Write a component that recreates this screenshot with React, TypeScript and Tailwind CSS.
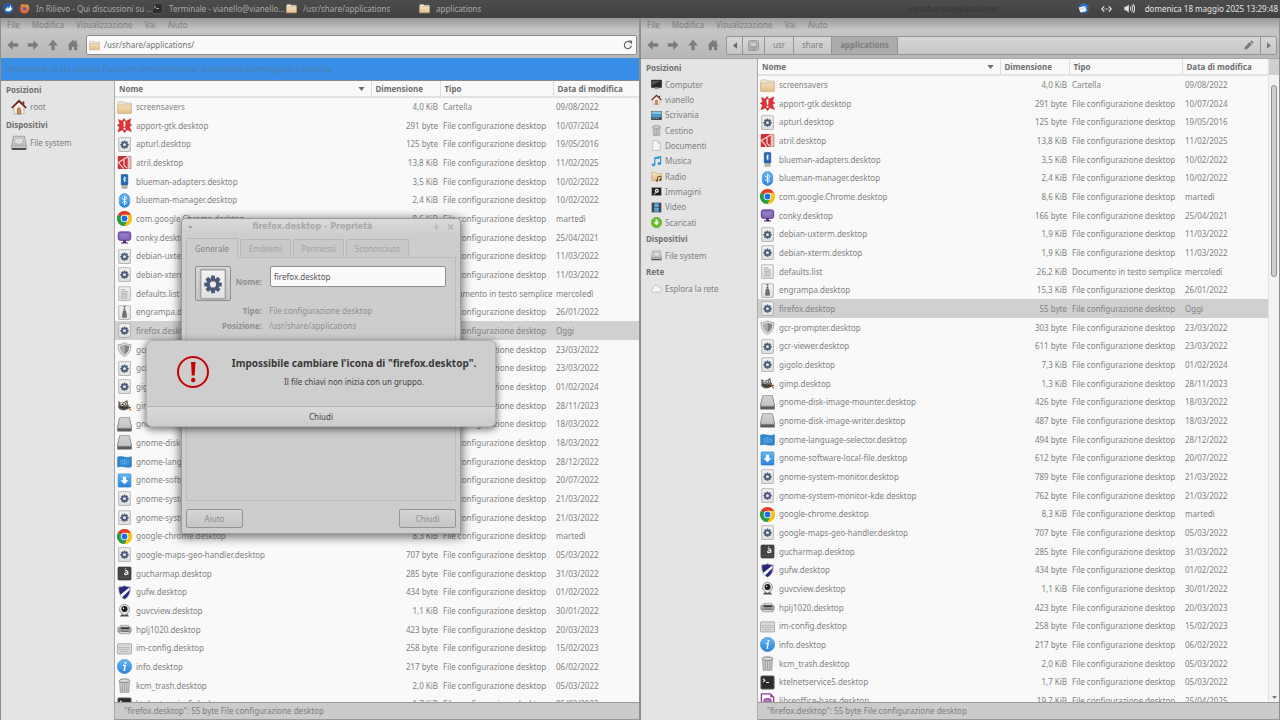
import type { ReactNode } from "react";
import clsx from "clsx";

type FileRow = [icon: string, name: string, size: string, type: string, date: string];

const DESKTOP = "File configurazione desktop";

const files: FileRow[] = [
  ["folder", "screensavers", "4,0 KiB", "Cartella", "09/08/2022"],
  ["apport", "apport-gtk.desktop", "291 byte", DESKTOP, "10/07/2024"],
  ["gear", "apturl.desktop", "125 byte", DESKTOP, "19/05/2016"],
  ["atril", "atril.desktop", "13,8 KiB", DESKTOP, "11/02/2025"],
  ["adapter", "blueman-adapters.desktop", "3,5 KiB", DESKTOP, "10/02/2022"],
  ["bluetooth", "blueman-manager.desktop", "2,4 KiB", DESKTOP, "10/02/2022"],
  ["chrome", "com.google.Chrome.desktop", "8,6 KiB", DESKTOP, "martedì"],
  ["conky", "conky.desktop", "166 byte", DESKTOP, "25/04/2021"],
  ["gear", "debian-uxterm.desktop", "1,9 KiB", DESKTOP, "11/03/2022"],
  ["gear", "debian-xterm.desktop", "1,9 KiB", DESKTOP, "11/03/2022"],
  ["text", "defaults.list", "26,2 KiB", "Documento in testo semplice", "mercoledì"],
  ["zip", "engrampa.desktop", "15,3 KiB", DESKTOP, "26/01/2022"],
  ["gear", "firefox.desktop", "55 byte", DESKTOP, "Oggi"],
  ["shield", "gcr-prompter.desktop", "303 byte", DESKTOP, "23/03/2022"],
  ["gear", "gcr-viewer.desktop", "611 byte", DESKTOP, "23/03/2022"],
  ["gear", "gigolo.desktop", "7,3 KiB", DESKTOP, "01/02/2024"],
  ["gimp", "gimp.desktop", "1,3 KiB", DESKTOP, "28/11/2023"],
  ["disk", "gnome-disk-image-mounter.desktop", "426 byte", DESKTOP, "18/03/2022"],
  ["disk", "gnome-disk-image-writer.desktop", "487 byte", DESKTOP, "18/03/2022"],
  ["flag", "gnome-language-selector.desktop", "494 byte", DESKTOP, "28/12/2022"],
  ["install", "gnome-software-local-file.desktop", "612 byte", DESKTOP, "20/07/2022"],
  ["gear", "gnome-system-monitor.desktop", "789 byte", DESKTOP, "21/03/2022"],
  ["gear", "gnome-system-monitor-kde.desktop", "762 byte", DESKTOP, "21/03/2022"],
  ["chrome", "google-chrome.desktop", "8,3 KiB", DESKTOP, "martedì"],
  ["gear", "google-maps-geo-handler.desktop", "707 byte", DESKTOP, "05/03/2022"],
  ["charmap", "gucharmap.desktop", "285 byte", DESKTOP, "31/03/2022"],
  ["gufw", "gufw.desktop", "434 byte", DESKTOP, "01/02/2022"],
  ["webcam", "guvcview.desktop", "1,1 KiB", DESKTOP, "30/01/2022"],
  ["printer", "hplj1020.desktop", "423 byte", DESKTOP, "20/03/2023"],
  ["keyboard", "im-config.desktop", "258 byte", DESKTOP, "15/02/2023"],
  ["info", "info.desktop", "217 byte", DESKTOP, "06/02/2022"],
  ["trash", "kcm_trash.desktop", "2,0 KiB", DESKTOP, "05/03/2022"],
  ["terminal", "ktelnetservice5.desktop", "1,7 KiB", DESKTOP, "05/03/2022"],
  ["base", "libreoffice-base.desktop", "19,7 KiB", DESKTOP, "25/04/2025"],
];

const gearTeeth = [0, 45, 90, 135, 180, 225, 270, 315];

const Gear = () => (
  <g fill="#4b5a78">
    {gearTeeth.map((a) => (
      <rect key={a} x="7" y="3.8" width="2" height="2.4" rx=".4" transform={`rotate(${a} 8 8.2)`} />
    ))}
    <circle cx="8" cy="8.2" r="2.4" fill="none" stroke="#4b5a78" strokeWidth="1.7" />
  </g>
);

const Page = ({ children }: { children?: ReactNode }) => (
  <>
    <rect x="1.8" y=".8" width="12.4" height="14.6" rx=".5" fill="url(#page)" stroke="#a3a3a3" strokeWidth=".8" />
    {children}
  </>
);

const icons: Record<string, ReactNode> = {
  folder: (
    <>
      <path d="M1 3.2 1.6 2h5l.8 1.3H15v3H1z" fill="#f3eee4" stroke="#bba888" strokeWidth=".7" />
      <path d="M.6 5.2h14.8v8.3a.8.8 0 0 1-.8.8H1.4a.8.8 0 0 1-.8-.8z" fill="url(#folder)" stroke="#c8a97c" strokeWidth=".7" />
    </>
  ),
  apport: (
    <>
      <path
        d="M7.500.5 9.600 3.500 14.800.8l-1.300 4.700 2.300 2-2.600 1.800 2.300 5-5-1.800L8 15.700l-2-3-5 2 1.700-5L.2 7.800l2.600-2L1.500 1.500l4 1.600z"
        fill="#dc3437"
        stroke="#b71f25"
        strokeWidth=".5"
      />
      <path d="M6.900 3.500h2.200l-.4 5.800H7.300zM7 10.400h2v2H7z" fill="#fff" />
    </>
  ),
  gear: <Page><Gear /></Page>,
  atril: (
    <>
      <rect x=".8" y="1" width="14.400" height="14" rx="1" fill="#ca3034" />
      <path d="M12 1.500 1.500 8 7 14.500M7.500 5v6l3 3M12 1.500V15" fill="none" stroke="#f4e1df" strokeWidth="1.200" />
      <path d="M12.600 1.500h2v13h-2z" fill="#d9d2cf" />
    </>
  ),
  adapter: (
    <>
      <rect x="4.500" y=".5" width="7" height="11.500" rx="1" fill="#2268b8" stroke="#174b8b" strokeWidth=".6" />
      <path d="M5.200 12h5.600v3.300H5.200z" fill="#b9bda8" stroke="#8c8f80" strokeWidth=".5" />
      <path d="m6.600 4.300 2.800 2.800L8 8.400V2.800l1.400 1.300-2.800 2.800" fill="none" stroke="#fff" strokeWidth=".8" />
    </>
  ),
  bluetooth: (
    <>
      <rect x="2.500" y=".6" width="11" height="14.800" rx="5.300" fill="url(#blue)" stroke="#2f78bd" strokeWidth=".5" />
      <path d="m5.500 5.300 5 5L8 12.600V3.400l2.500 2.300-5 5" fill="none" stroke="#fff" strokeWidth="1" />
    </>
  ),
  chrome: (
    <>
      <circle cx="8" cy="8" r="8" fill="#fbc116" />
      <path d="M8 8 1.070 4A8 8 0 0 1 14.930 4z" fill="#e33b2e" />
      <path d="M8 8 1.070 4A8 8 0 0 0 8 16l3.500-6z" fill="#249b48" />
      <path d="M8 4h6.930A8 8 0 0 1 8 16l3.500-6z" fill="#fbc116" />
      <circle cx="8" cy="8" r="4" fill="#fff" />
      <circle cx="8" cy="8" r="3.100" fill="#1b6ee8" />
    </>
  ),
  conky: (
    <>
      <rect x="1.400" y="2" width="13.200" height="9" rx="2" fill="#8669bd" stroke="#55368c" strokeWidth="1" />
      <path d="M3.500 4.500h9M3.500 6h9M3.500 7.500h7" stroke="#b19bd7" strokeWidth=".5" />
      <path d="M6.500 11h3v2h2v1.300h-7V13h2z" fill="#4b2d7c" />
    </>
  ),
  text: <Page><path d="M4 4h5M4 6.200h8M4 8.400h7M4 10.600h8M4 12.800h7" stroke="#a9a9a9" strokeWidth="1.100" /></Page>,
  zip: (
    <Page>
      <path d="M8 1v6" stroke="#555" strokeWidth="1.800" strokeDasharray="1 .6" />
      <path d="M6.800 6.500h2.400l.8 4v2.500H6v-2.500z" fill="#747474" stroke="#484848" strokeWidth=".6" />
    </Page>
  ),
  shield: (
    <>
      <path d="M8 .8C5.500 2.400 3.500 2.700 1.200 2.700c0 6 1.600 10.200 6.800 12.600 5.200-2.400 6.800-6.600 6.800-12.600C12.500 2.700 10.500 2.400 8 .8z" fill="#e3e3e3" stroke="#868686" strokeWidth=".7" />
      <path d="M8 2.600C6 3.800 4.700 4 2.900 4.100 3.100 8.500 4.300 11.600 8 13.500z" fill="#aaadaf" />
      <path d="M8 2.600c2 1.200 3.300 1.400 5.100 1.500-.2 4.400-1.400 7.500-5.100 9.400z" fill="#7f8386" />
    </>
  ),
  gimp: (
    <>
      <path d="M1.200 2.800 4 5l3.500-.7L11 2l.7 4.500c1.500 1.500 1.500 4-.5 5.500-3 2-8.500 1.500-9.700-1.500-.7-2 .5-3.500.2-5z" fill="#5f594f" />
      <circle cx="5.300" cy="6.500" r="1.800" fill="#f2f2ec" />
      <circle cx="9" cy="6.200" r="1.700" fill="#f2f2ec" />
      <circle cx="5.500" cy="6.600" r=".8" />
      <circle cx="8.900" cy="6.300" r=".8" />
      <path d="m3 9.500 4.500 1.200L14.500 10" stroke="#312d28" strokeWidth="1.400" fill="none" />
      <path d="m12 10 2.800 3.200" stroke="#b4713b" strokeWidth="1.600" />
    </>
  ),
  disk: (
    <>
      <path d="M2.500 1.300h11L15.700 11v3.600a.9.900 0 0 1-.9.900H1.200a.9.900 0 0 1-.9-.9V11z" fill="#5c5c5c" />
      <path d="M2.800.6h10.400l2.500 11.400H.3z" fill="url(#metal)" stroke="#858585" strokeWidth=".7" />
    </>
  ),
  flag: (
    <>
      <path d="M.6 3.300c2.500-1 4.500-.6 7.400 0s5 .4 7.400-.5v10.800c-2.400.8-4.500.8-7.400.2s-5-.6-7.400.1z" fill="#2c86cf" stroke="#1c68aa" strokeWidth=".5" />
      <circle cx="8" cy="8.400" r="2.600" fill="none" stroke="#8ac0eb" strokeWidth=".6" />
      <path d="M5.400 8.400h5.200M8 5.800v5.200" stroke="#8ac0eb" strokeWidth=".4" />
      <path d="M4.300 6c-1.500 2-.8 4.500.8 5.600M11.700 6c1.500 2 .8 4.500-.8 5.600" fill="none" stroke="#8ac0eb" strokeWidth=".5" />
    </>
  ),
  install: (
    <>
      <rect x="1.200" y="1" width="13.600" height="14" rx=".8" fill="url(#blue)" stroke="#2d80c8" strokeWidth=".7" />
      <path d="M6.300 4h3.400v3.700h2.500L8 12 3.800 7.700h2.500z" fill="#fff" />
    </>
  ),
  charmap: (
    <>
      <rect x="1" y="1" width="14" height="14" rx="1.200" fill="#444" stroke="#303030" strokeWidth=".6" />
      <path d="M8.500 2.500 10 3.600" stroke="#ddd" strokeWidth=".9" />
      <path d="M8.300 5.500c1.500-1 3.300-.6 3.300.9v2.800M11.600 7c-2-.2-3.500.2-3.500 1.300 0 1.300 2.200 1.300 3.500-.1" fill="none" stroke="#eee" strokeWidth="1.200" />
      <path d="M1.500 12h13" stroke="#666" strokeWidth=".5" />
    </>
  ),
  gufw: (
    <>
      <path d="M8 .8c-2 .9-4 1.200-6.200 1.200 0 6 1.200 10.300 6.200 13.300 5-3 6.200-7.300 6.200-13.300C12 2 10 1.700 8 .8z" fill="#27277d" stroke="#b0b0bc" strokeWidth=".8" />
      <path d="M13.400 2.300 3.300 10.700l2 2.600 8.200-8z" fill="#fff" />
    </>
  ),
  webcam: (
    <>
      <circle cx="8" cy="6.800" r="5.400" fill="#dedede" stroke="#888" strokeWidth=".8" />
      <circle cx="8" cy="6.500" r="3.200" fill="#1f1f1f" />
      <circle cx="7" cy="5.500" r=".8" fill="#fff" />
      <path d="M4.500 12.200h7l1.200 2.300H3.300z" fill="#4c4c4c" />
      <circle cx="8" cy="11.500" r="1.100" fill="#fff" />
    </>
  ),
  printer: (
    <>
      <path d="M4 3.500h8.500l1 3H3z" fill="#dadada" stroke="#777" strokeWidth=".5" />
      <rect x=".8" y="5.500" width="14.400" height="5.500" rx="1" fill="#a8a8a8" stroke="#808080" strokeWidth=".5" />
      <path d="M4 5.800h9v1.800H4z" fill="#333" />
      <path d="M3.500 9.500h9.500l.8 3H3z" fill="#ececec" stroke="#666" strokeWidth=".6" />
      <path d="M4.500 10.300h8" stroke="#444" strokeWidth=".8" />
    </>
  ),
  keyboard: (
    <>
      <rect x=".5" y="3" width="15" height="10.800" rx=".6" fill="#d9d9d9" stroke="#9a9a9a" strokeWidth=".8" />
      <path d="M2 7h12M2 9h12M3.500 11.200h9" stroke="#a2a2a2" strokeWidth="1" strokeDasharray="1 .7" />
    </>
  ),
  info: (
    <>
      <circle cx="8" cy="8" r="7.600" fill="url(#blue)" stroke="#317fc7" strokeWidth=".6" />
      <circle cx="9" cy="4.300" r="1.100" fill="#fff" />
      <path d="M6.400 6.800h2.400L7.600 11.800h1.300" fill="none" stroke="#fff" strokeWidth="1.400" />
    </>
  ),
  trash: (
    <>
      <path d="M2.800 3.500h10.400L12.500 15.200h-9z" fill="url(#metal)" stroke="#8b8b8b" strokeWidth=".8" />
      <path d="M5.500 5.500v8.500M8 5.500v8.500M10.500 5.500v8.500" stroke="#999" strokeWidth=".9" />
      <ellipse cx="8" cy="2.900" rx="5.700" ry="2" fill="#d9d9d9" stroke="#777" strokeWidth=".9" />
    </>
  ),
  terminal: (
    <>
      <rect x="1" y="1" width="14" height="14" rx="1" fill="#2c2c2c" stroke="#5f5f5f" strokeWidth="1" />
      <path d="m3.200 4 2 1.800-2 1.800M6.500 8h3.200" fill="none" stroke="#eee" strokeWidth="1.200" />
    </>
  ),
  base: (
    <>
      <path d="M1.500 1h9.500l3.500 3.500V15h-13z" fill="#fff" stroke="#8e3b92" strokeWidth="1.400" />
      <path d="M11 1v3.500h3.500z" fill="#8e3b92" />
      <rect x="4" y="6" width="8" height="7" rx="2" fill="#b372b6" stroke="#7a2c7e" strokeWidth=".8" />
    </>
  ),
  home: (
    <>
      <path d="M3 8 8 3l5 5v7H3z" fill="#f6efe6" stroke="#a99785" strokeWidth=".6" />
      <path d="M.8 9 8 1.800 15.200 9" fill="none" stroke="#6f1f1b" strokeWidth="1.700" />
      <path d="M6.300 15v-4.500c0-2.200 3.400-2.200 3.400 0V15z" fill="#c98955" stroke="#89562f" strokeWidth=".6" />
      <path d="M11.500 2.500h1.800v3l-1.800-1.600z" fill="#6f1f1b" />
    </>
  ),
  drive: (
    <>
      <rect x=".6" y="10" width="14.800" height="5" rx="1" fill="#4f4f4f" />
      <path d="M2.500 1.200h11L15.400 11H.6z" fill="url(#metal)" stroke="#8a8a8a" strokeWidth=".7" />
      <ellipse cx="8" cy="6" rx="4.500" ry="3.200" fill="#dedede" stroke="#a5a5a5" strokeWidth=".7" />
      <path d="M1 11h14v2H1z" fill="#c2c2c2" />
    </>
  ),
  computer: (
    <>
      <rect x=".5" y="1.500" width="15" height="11" rx=".6" fill="#26262c" stroke="#111" strokeWidth=".6" />
      <path d="M1.500 2.500h13L1.500 9z" fill="#51515b" />
      <path d="M6 12.500h4l1.500 2.500h-7z" fill="#999" />
    </>
  ),
  desktop: (
    <>
      <rect x=".5" y="2" width="15" height="12" fill="#4b9ccb" stroke="#4d4d4d" strokeWidth=".8" />
      <path d="M1 2.500h14v3H1z" fill="#8bc8e6" />
      <path d="M1 11h14v3H1z" fill="#333" />
      <path d="M2.500 12.300h9" stroke="#ddd" strokeWidth="1" strokeDasharray="1.500 1" />
    </>
  ),
  doc: <path d="M2.500.8h7.500L13.500 4.500v10.700h-11zM10 .8v3.700h3.500" fill="#f5f5f5" stroke="#a5a5a5" strokeWidth=".8" />,
  music: (
    <>
      <path d="M5.500 12.500V2.500L14 1v9.500" fill="none" stroke="#379bd2" strokeWidth="1.800" />
      <path d="M5.500 3.500 14 2" stroke="#379bd2" strokeWidth="2.500" />
      <ellipse cx="3.700" cy="12.800" rx="2.700" ry="2.200" fill="#379bd2" />
      <ellipse cx="12.200" cy="11" rx="2.700" ry="2.200" fill="#379bd2" />
    </>
  ),
  radio: (
    <>
      <path d="M.7 2h6l1 1.500h7.600v10.800H.7z" fill="url(#folder)" stroke="#bd9e70" strokeWidth=".8" />
      <path d="M9.500 14V8.500l5-1v5.500" fill="none" stroke="#6e5434" strokeWidth="1.400" />
      <circle cx="8.500" cy="14" r="1.600" fill="#6e5434" />
      <circle cx="13.500" cy="13" r="1.600" fill="#6e5434" />
    </>
  ),
  image: (
    <>
      <rect x="1" y="2" width="14" height="12" fill="#1f1f1f" stroke="#aaa" strokeWidth="1" />
      <circle cx="8.500" cy="7" r="3" fill="#e9e9e9" />
      <circle cx="8.500" cy="7" r="1.200" fill="#333" />
      <path d="m4.500 12 4-4" stroke="#ddd" strokeWidth="1.500" />
    </>
  ),
  video: (
    <>
      <rect x="1" y="1" width="14" height="14" fill="#2d3035" />
      <path d="M4.500 1.800h7v5.700h-7zM4.500 8.500h7v5.700h-7z" fill="#56a6df" />
      <path d="M2.700 2v13M13.300 2v13" stroke="#aaa" strokeWidth="1" strokeDasharray="1.200 1.200" />
    </>
  ),
  download: (
    <>
      <circle cx="8" cy="8" r="7.500" fill="#6cbf2e" stroke="#4c9618" strokeWidth=".8" />
      <path d="M6.700 3.500h2.600v4h2.500L8 12 4.200 7.500h2.500z" fill="#fff" />
    </>
  ),
  cloud: <path d="M4 13.500C0 13.500-.2 8.500 3.200 8 3.200 3 10 1.500 11.600 6c4.500.2 4.800 7.500.2 7.500z" fill="#f4f4f4" stroke="#ababab" strokeWidth=".9" />,
  firefox: (
    <>
      <circle cx="8" cy="8.500" r="7" fill="#d9603a" />
      <path d="M2 4c1-2 2-2.500 2-3 1 1.500 3 2 5 2.500 3 1 4 4 2.500 6.500C10 13 6 13 4.500 10.500 3 8.500 4 6 6 5.500 4.500 4.500 3 4.500 2 4z" fill="#dc9238" />
      <circle cx="8" cy="8.500" r="2.800" fill="#76559f" />
      <path d="M11 1c3.500 2.500 4.500 6 3.500 9.500C14 6 12 5 10.500 4z" fill="#e0b048" />
    </>
  ),
  xfce: (
    <>
      <rect x=".5" y=".5" width="15" height="15" rx="7" fill="#2260b5" />
      <path d="M3 9.500c2-.5 3-2 4-4l1.500 2 3-4.500.5 3.500 1.500 2-3 3.500H5z" fill="#fff" />
    </>
  ),
  mail: (
    <>
      <path d="M3 2.500C7-.5 14 0 15.500 5c1 4-1.500 9-6 10.200C4 15 .5 11 1.500 7z" fill="#2773c9" />
      <path d="m1 6.500 9.500-2 2 7-9 2.300z" fill="#f4f4f4" />
      <path d="m1 6.500 6.300 3 3.200-5" fill="none" stroke="#a8b8cc" strokeWidth=".8" />
    </>
  ),
};

function Icon({ name, className }: { name: string; className: string }) {
  return (
    <svg viewBox="0 0 16 16" className={clsx("shrink-0", className)} aria-hidden="true">
      {icons[name]}
    </svg>
  );
}

function Gradients() {
  return (
    <svg className="absolute h-0 w-0" aria-hidden="true">
      <defs>
        <linearGradient id="page" x2="0" y2="1">
          <stop stopColor="#f4f4f4" />
          <stop offset="1" stopColor="#e0e0e0" />
        </linearGradient>
        <linearGradient id="folder" x2="0" y2="1">
          <stop stopColor="#f4dfb9" />
          <stop offset="1" stopColor="#e2bf8b" />
        </linearGradient>
        <linearGradient id="blue" x2="0" y2="1">
          <stop stopColor="#64b8f6" />
          <stop offset="1" stopColor="#2b82de" />
        </linearGradient>
        <linearGradient id="metal" x2="0" y2="1">
          <stop stopColor="#d3d3d3" />
          <stop offset="1" stopColor="#c2c2c2" />
        </linearGradient>
      </defs>
    </svg>
  );
}

function Task({ icon, label, className }: { icon: string; label: string; className: string }) {
  return (
    <button className={clsx("flex shrink-0 items-center gap-1.5 whitespace-nowrap text-left text-[#a8a8a8]", className)}>
      <Icon name={icon} className="size-[11px]" />
      {label}
    </button>
  );
}

function Panel() {
  return (
    <header className="flex h-[18px] shrink-0 items-center bg-linear-to-b from-[#4c4c4c] to-[#414141] pb-px pl-[3px] pr-0.5">
      <button aria-label="Menu" className="mr-[5px]">
        <Icon name="xfce" className="size-[11px]" />
      </button>
      <Task icon="firefox" label="In Rilievo - Qui discussioni su ..." className="w-[133px]" />
      <Task icon="terminal" label="Terminale - vianello@vianello..." className="w-[134px]" />
      <Task icon="folder" label="/usr/share/applications" className="w-[133px]" />
      <Task icon="folder" label="applications" className="w-[134px]" />
      <span className="flex-1 whitespace-nowrap pr-20 text-right font-bold text-[#3b3b3b]">usr/share/applications</span>
      <div className="flex items-center gap-3 text-[#e3e3e3]">
        <button aria-label="Posta">
          <Icon name="mail" className="size-[11px]" />
        </button>
        <button aria-label="Rete">
          <svg viewBox="0 0 16 12" className="h-2 w-[11px]" fill="none" stroke="currentColor" strokeWidth="1.800">
            <path d="M4.500 2 1 6l3.500 4M11.500 2 15 6l-3.500 4" />
            <path d="M5 6h1.500M7.300 6h1.500M9.600 6h1.500" />
          </svg>
        </button>
        <button aria-label="Volume">
          <svg viewBox="0 0 16 16" className="size-[11px]" fill="none" stroke="currentColor" strokeWidth="1.500">
            <path d="M.5 5.500H3L7 2v12L3 10.500H.5z" fill="currentColor" stroke="none" />
            <path d="M9 5.500c1.200 1.500 1.200 3.500 0 5M11 3.500c2.300 2.500 2.300 6.500 0 9M13 1.500c3.500 3.700 3.500 9.300 0 13" />
          </svg>
        </button>
        <span className="-ml-0.5 whitespace-nowrap">domenica 18 maggio 2025 13:29:48</span>
      </div>
    </header>
  );
}

function NavButton({ label, children }: { label: string; children: ReactNode }) {
  return (
    <button aria-label={label} className="w-3 text-[#7c7c7c]">
      <svg viewBox="0 0 16 16" className="size-3" fill="currentColor">
        {children}
      </svg>
    </button>
  );
}

function Chrome({ children }: { children: ReactNode }) {
  return (
    <div className="shrink-0 bg-linear-to-b from-[#999] via-[#c6c6c6] via-30% to-[#b7b7b7]">
      <nav className="flex h-[13px] items-center gap-3 pl-1.5 text-[#7d7d7d]">
        <button>File</button>
        <button>Modifica</button>
        <button>Visualizzazione</button>
        <button>Vai</button>
        <button>Aiuto</button>
      </nav>
      <div className="flex h-[27px] items-center pb-px pl-1.5 pr-[2px] pt-0.5">
        <div className="flex w-[79px] gap-2">
          <NavButton label="Indietro">
            <path d="M7.500 1.500v4.300H15v4.400H7.500v4.300L.5 8z" />
          </NavButton>
          <NavButton label="Avanti">
            <path d="M8.500 1.500v4.300H1v4.400h7.500v4.300l7-6.500z" />
          </NavButton>
          <NavButton label="Su">
            <path d="M1.500 8.500h4.300V15h4.400V8.500h4.300L8 1z" />
          </NavButton>
          <NavButton label="Home">
            <path d="M8 1 .5 8.500h2V15h4v-4.500h3V15h4V8.500h2L13 6V2h-2v2z" />
          </NavButton>
        </div>
        {children}
      </div>
    </div>
  );
}

function FileTable({ rows }: { rows: FileRow[] }) {
  return (
    <div className="min-w-0 flex-1 overflow-hidden bg-[#f9f9f9]">
      <table className="w-full table-fixed border-collapse whitespace-nowrap">
        <colgroup>
          <col />
          <col className="w-[69px]" />
          <col className="w-[113px]" />
          <col className="w-[86px]" />
        </colgroup>
        <thead>
          <tr className="h-4 border-b-2 border-[#e2e2e2] text-left text-[#6f6f6f] *:border-r *:border-[#dcdcdc] *:py-0 *:pl-1 *:font-bold *:last:border-r-0">
            <th>
              <div className="flex items-center justify-between pr-1.5">
                Nome
                <svg viewBox="0 0 8 5" className="h-1 w-[7px]" fill="#6f6f6f">
                  <path d="M0 0h8L4 5z" />
                </svg>
              </div>
            </th>
            <th>Dimensione</th>
            <th>Tipo</th>
            <th>Data di modifica</th>
          </tr>
        </thead>
        <tbody className="text-[#828282]">
          {rows.map(([icon, name, size, type, date]) => (
            <tr
              key={name}
              className={clsx("h-[19px] *:p-0 nth-[3n]:h-[18px]", name === "firefox.desktop" && "bg-[#d0d0d0]")}
            >
              <td>
                <div className="flex items-center gap-1 pl-0.5">
                  <Icon name={icon} className="size-[15px]" />
                  {name}
                </div>
              </td>
              <td>
                <div className="pr-0.5 text-right">{size}</div>
              </td>
              <td>
                <div className="pl-[3px]">{type}</div>
              </td>
              <td>
                <div className="pl-[3px]">{date}</div>
              </td>
            </tr>
          ))}
        </tbody>
      </table>
    </div>
  );
}

function StatusBar() {
  return (
    <footer className="flex h-[18px] shrink-0 items-center border-y border-[#9a9a9a] bg-[#cbcbcb] pl-[9px] text-[#7d7d7d]">
      "firefox.desktop": 55 byte File configurazione desktop
    </footer>
  );
}

function RootWindow() {
  return (
    <section className="flex min-w-0 flex-1 flex-col border-x border-[#8f8f8f]">
      <Chrome>
        <div className="flex h-5 flex-1 items-center rounded-xs border border-[#8d8d8d] bg-[#fafafa] px-0.5">
          <Icon name="folder" className="size-[11px]" />
          <input
            aria-label="Percorso"
            defaultValue="/usr/share/applications/"
            className="min-w-0 flex-1 bg-transparent pl-1 text-[#707070] outline-none"
          />
          <button aria-label="Ricarica">
            <svg viewBox="0 0 16 16" className="mr-px size-[10px]" fill="none" stroke="#666" strokeWidth="1.900">
              <path d="M13.500 9a5.700 5.700 0 1 1-2.300-5.500" />
              <path d="M8 .5 14.500 1v6z" fill="#666" stroke="none" />
            </svg>
          </button>
        </div>
      </Chrome>
      <div className="flex h-[23px] shrink-0 items-center border-b border-[#8a8a8a] bg-[#388de6] pl-1.5 text-[#4f7eb0]">
        Attenzione, si sta usando l'account amministratore, si potrebbe danneggiare il sistema.
      </div>
      <div className="flex min-h-0 flex-1">
        <aside className="w-[114px] shrink-0 border-r border-[#a9a9a9] bg-[#e4e4e4] text-[#808080]">
          <h2 className="flex h-[17px] items-center pl-[5px] font-bold text-[#6f6f6f]">Posizioni</h2>
          <a href="#root-home" className="flex h-[18px] items-center gap-[3px] pl-2.5">
            <Icon name="home" className="size-4" />
            root
          </a>
          <h2 className="flex h-[18px] items-center pl-[5px] font-bold text-[#6f6f6f]">Dispositivi</h2>
          <a href="#root-fs" className="flex h-[18px] items-center gap-[3px] pl-2.5">
            <Icon name="drive" className="size-4" />
            File system
          </a>
        </aside>
        <div className="flex min-w-0 flex-1 flex-col">
          <div className="flex min-h-0 flex-1">
            <FileTable rows={files.slice(0, -1)} />
          </div>
          <StatusBar />
        </div>
      </div>
    </section>
  );
}

const places = [
  ["computer", "Computer"],
  ["home", "vianello"],
  ["desktop", "Scrivania"],
  ["trash", "Cestino"],
  ["doc", "Documenti"],
  ["music", "Musica"],
  ["radio", "Radio"],
  ["image", "Immagini"],
  ["video", "Video"],
  ["download", "Scaricati"],
];

function PlaceGroup({ title, items }: { title: string; items: string[][] }) {
  return (
    <>
      <h2 className="flex h-[18px] items-center pl-[5px] font-bold text-[#6f6f6f]">{title}</h2>
      <ul>
        {items.map(([icon, label]) => (
          <li key={label} className="h-[15px] nth-[3n]:h-4">
            <a href={`#${icon}`} className="flex h-full items-center gap-[3px] pl-2.5">
              <Icon name={icon} className="size-[11px]" />
              {label}
            </a>
          </li>
        ))}
      </ul>
    </>
  );
}

function UserWindow() {
  const segment = "flex h-full items-center justify-center border-r border-[#959595]";
  return (
    <section className="flex min-w-0 flex-1 flex-col border-x border-[#8f8f8f]">
      <Chrome>
        <div className="flex h-[19px] flex-1 items-center rounded-xs border border-[#959595] bg-linear-to-b from-[#d6d6d6] to-[#c6c6c6] text-[#7d7d7d]">
          <button aria-label="Scorri a sinistra" className={clsx(segment, "w-4")}>
            <svg viewBox="0 0 5 8" className="h-[7px] w-1" fill="#666">
              <path d="M5 0v8L0 4z" />
            </svg>
          </button>
          <button aria-label="File system" className={clsx(segment, "w-[22px]")}>
            <svg viewBox="0 0 16 16" className="size-[11px]" fill="none" stroke="#888" strokeWidth="1.200">
              <rect x="1" y="1" width="14" height="14" rx="1" />
              <rect x="3" y="3" width="10" height="7" rx="3" />
              <path d="M1.500 11.500h13M4 13.300h8" />
            </svg>
          </button>
          <button className={clsx(segment, "w-[29px]")}>usr</button>
          <button className={clsx(segment, "w-[38px]")}>share</button>
          <button className={clsx(segment, "w-[66px] bg-[#ababab] font-bold")}>applications</button>
          <span className="flex-1" />
          <button aria-label="Modifica percorso" className={clsx(segment, "w-6")}>
            <svg viewBox="0 0 16 16" className="size-[10px]" fill="#777">
              <path d="m.5 15.500 1.200-4.700 7.500-7.500 3.500 3.500-7.500 7.500zM10.200 2.300 12 .5l3.500 3.500-1.800 1.800z" />
            </svg>
          </button>
          <button aria-label="Scorri a destra" className="flex h-full w-[15px] items-center justify-center">
            <svg viewBox="0 0 5 8" className="h-[7px] w-1" fill="#777">
              <path d="M0 0v8l5-4z" />
            </svg>
          </button>
        </div>
      </Chrome>
      <div className="flex min-h-0 flex-1 border-t border-[#a5a5a5]">
        <aside className="w-[117px] shrink-0 border-r border-[#a9a9a9] bg-[#e4e4e4] text-[#808080]">
          <PlaceGroup title="Posizioni" items={places} />
          <PlaceGroup title="Dispositivi" items={[["drive", "File system"]]} />
          <PlaceGroup title="Rete" items={[["cloud", "Esplora la rete"]]} />
        </aside>
        <div className="flex min-w-0 flex-1 flex-col">
          <div className="flex min-h-0 flex-1">
            <FileTable rows={files} />
            <div className="flex w-[11px] shrink-0 flex-col items-center border-l border-[#e0e0e0] bg-[#f3f3f3]">
              <div className="h-4 w-full bg-[#cfcfcf]" />
              <div className="mt-2.5 h-48 w-1.5 rounded-full border border-[#8f8f8f] bg-[#cfcfcf]" />
              <svg viewBox="0 0 8 5" className="mb-[3px] mt-auto h-[3px] w-[5px]" fill="#777">
                <path d="M0 0h8L4 5z" />
              </svg>
            </div>
          </div>
          <StatusBar />
        </div>
      </div>
    </section>
  );
}

const tabs = [
  ["Generale", "w-[52px]"],
  ["Emblemi", "w-[51px]"],
  ["Permessi", "w-[51px]"],
  ["Sconosciuto", "w-[63px]"],
];

function PropertiesDialog() {
  const action = "h-[19px] w-[57px] rounded-xs border border-[#959595] bg-linear-to-b from-[#d4d4d4] to-[#c6c6c6]";
  return (
    <div
      role="dialog"
      aria-label="firefox.desktop - Proprietà"
      className="absolute left-[181px] top-[218px] flex h-[316px] w-[280px] flex-col rounded-t border border-[#9c9c9c] bg-[#cdcdcd] px-1 pb-[5px] text-[#8f8f8f] shadow-[0_2px_10px_2px_rgba(0,0,0,0.5)]"
    >
      <div className="-mx-1 flex h-4 shrink-0 items-center rounded-t bg-linear-to-b from-[#dadada] to-[#cdcdcd] px-1.5 text-[#a8a8a8]">
        <svg viewBox="0 0 6 4" className="h-[3px] w-[5px]" fill="#a0a0a0">
          <path d="M0 0h6L3 4z" />
        </svg>
        <h2 className="flex-1 text-center font-['DejaVu_Sans'] font-bold">firefox.desktop - Proprietà</h2>
        <svg viewBox="0 0 22 8" className="h-2 w-[22px]" stroke="#b0b0b0" strokeWidth="1.200">
          <path d="M2 4h5M4.500 1.500v5M16 1.500l5 5M21 1.500l-5 5" />
        </svg>
      </div>
      <div role="tablist" className="flex h-[22px] shrink-0 items-end gap-0.5 pt-[3px]">
        {tabs.map(([tab, width], i) => (
          <button
            key={tab}
            role="tab"
            aria-selected={i === 0}
            className={clsx(
              "rounded-t-xs border border-b-0 border-[#b9b9b9]",
              width,
              i === 0 ? "z-10 -mb-px h-5 bg-[#cdcdcd] text-[#858585]" : "h-[18px] bg-[#c9c9c9] text-[#a3a3a3]",
            )}
          >
            {tab}
          </button>
        ))}
      </div>
      <div className="flex-1 border border-[#bcbcbc] px-2 pt-2">
        <div className="flex items-start">
          <button
            aria-label="Cambia icona"
            className="flex h-[35px] w-9 items-center justify-center rounded-xs border border-[#8f8f8f] bg-linear-to-b from-[#d8d8d8] to-[#c4c4c4]"
          >
            <Icon name="gear" className="size-8" />
          </button>
          <label htmlFor="file-name" className="w-[31px] pt-2.5 text-right font-bold">
            Nome:
          </label>
          <input
            id="file-name"
            defaultValue="firefox.desktop"
            className="ml-2 h-[21px] w-[176px] rounded-xs border border-[#8f8f8f] bg-[#fafafa] px-[3px] text-[#555] outline-none"
          />
        </div>
        <dl className="mt-0.5 grid grid-cols-[67px_1fr] gap-x-[7px] leading-[15px]">
          <dt className="text-right font-bold">Tipo:</dt>
          <dd>File configurazione desktop</dd>
          <dt className="text-right font-bold">Posizione:</dt>
          <dd>/usr/share/applications</dd>
        </dl>
      </div>
      <div className="mt-2 flex shrink-0 justify-between">
        <button className={action}>Aiuto</button>
        <button className={action}>Chiudi</button>
      </div>
    </div>
  );
}

function ErrorDialog() {
  return (
    <div
      role="alertdialog"
      aria-labelledby="error-title"
      className="absolute left-[146px] top-[340px] z-20 flex w-[350px] flex-col rounded-md border border-[#b3b3b3] bg-[#cecece] text-[#444] shadow-[0_2px_7px_1px_rgba(0,0,0,0.5)]"
    >
      <div className="flex h-[65px] items-start pl-[30px] pt-[15px]">
        <svg viewBox="0 0 32 32" className="size-8 shrink-0" fill="#c40000" aria-hidden="true">
          <circle cx="16" cy="16" r="15" fill="none" stroke="#c40000" strokeWidth="2" />
          <path d="M14 6h4.500l-.8 13.500h-2.900z" />
          <circle cx="16.200" cy="24" r="2.200" />
        </svg>
        <div className="flex-1 pl-1 text-center">
          <h2 id="error-title" className="whitespace-nowrap text-[10px] font-bold leading-[14px] text-[#3a3a3a]">
            Impossibile cambiare l'icona di "firefox.desktop".
          </h2>
          <p className="mt-1.5">Il file chiavi non inizia con un gruppo.</p>
        </div>
      </div>
      <button className="h-5 rounded-b-md border-t border-[#b5b5b5] bg-linear-to-b from-[#dadada] to-[#cbcbcb]">Chiudi</button>
    </div>
  );
}

export default function App() {
  return (
    <div className="relative flex h-screen flex-col overflow-hidden bg-[#c9c9c9] font-['Noto_Sans',sans-serif] text-[8px] leading-3">
      <Gradients />
      <Panel />
      <main className="flex min-h-0 flex-1">
        <RootWindow />
        <UserWindow />
      </main>
      <PropertiesDialog />
      <ErrorDialog />
    </div>
  );
}
